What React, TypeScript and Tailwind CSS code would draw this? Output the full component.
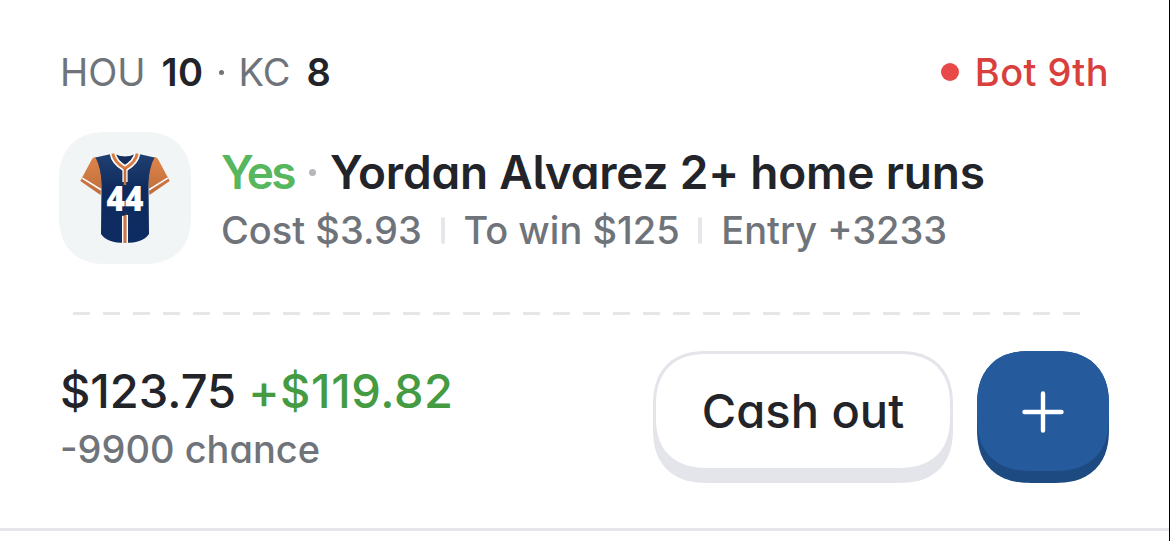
import React from 'react';
import { clsx } from 'clsx';

interface TeamScoreProps {
    team: string;
    score: number;
}

const TeamScore: React.FC<TeamScoreProps> = ({ team, score }) => (
    <span className="flex gap-[16px]">
        <span className="text-[#6f737a]">{team}</span>
        <span className="font-semibold tracking-[0.4px] text-[#222429]">{score}</span>
    </span>
);

const Divider: React.FC = () => <span className="h-[27px] w-[4px] rounded-full bg-[#e6e7ea]" />;

const JerseyIcon: React.FC<{ number: number }> = ({ number }) => (
    <svg viewBox="0 0 150 145" className="-mt-[1px] h-[145px] w-[150px] shrink-0" aria-hidden="true">
        <defs>
            <linearGradient id="body" x1="0" y1="0" x2="0" y2="1">
                <stop offset="0" stopColor="#213f70" />
                <stop offset="0.4" stopColor="#0f2b5d" />
                <stop offset="1" stopColor="#0d2c62" />
            </linearGradient>
            <linearGradient id="sleeve" x1="0" y1="0" x2="0" y2="1">
                <stop offset="0" stopColor="#df8448" />
                <stop offset="1" stopColor="#bd6d3d" />
            </linearGradient>
        </defs>
        {/* sleeves */}
        <path d="M46 32 Q43 32 41.5 35 L30.3 56 L50.5 70 L54 38 Z" fill="url(#sleeve)" />
        <path d="M104 32 Q107 32 108.5 35 L119.7 56 L99.5 70 L96 38 Z" fill="url(#sleeve)" />
        <path d="M32.3 53.2 L51.4 65" stroke="#fff" strokeWidth="1.5" />
        <path d="M117.7 53.2 L98.6 65" stroke="#fff" strokeWidth="1.5" />
        {/* body */}
        <path d="M61 29 Q75 35 89 29 L104.5 32.5 Q99 43 98.5 58 L99 109 Q93 118 75 118 Q57 118 51 109 L51.5 58 Q51 43 45.5 32.5 Z" fill="url(#body)" />
        <path d="M65 29 Q75 34 85 29 L82 36 L75 42 L68 36 Z" fill="#142d5b" />
        {/* collar */}
        <path d="M62.8 28.5 Q64 37 75 43.5 Q86 37 87.2 28.5" fill="none" stroke="#fff" strokeWidth="6.2" />
        <path d="M75 42 V57" stroke="#fff" strokeWidth="5.2" />
        <path d="M62.8 28.5 Q64 37 75 43.5 Q86 37 87.2 28.5" fill="none" stroke="#d77c45" strokeWidth="3" />
        <path d="M75 43 V60" stroke="#c66f3e" strokeWidth="2.6" />
        {/* placket */}
        <path d="M75 90 V118" stroke="#fff" strokeWidth="6" />
        <path d="M75 88 V118" stroke="#c9764a" strokeWidth="3.2" />
        <path d="M71 91 Q77 91 78.5 86 H71 Z" fill="#0f2b5d" />
        <text
            x="75"
            y="85.5"
            textAnchor="middle"
            textLength="37"
            lengthAdjust="spacingAndGlyphs"
            fill="#fff"
            className="font-['Open_Sans',sans-serif] text-[36px] font-extrabold"
        >
            {number}
        </text>
    </svg>
);

interface RaisedButtonProps {
    tone: 'light' | 'blue';
    label?: string;
    children: React.ReactNode;
}

const RaisedButton: React.FC<RaisedButtonProps> = ({ tone, label, children }) => (
    <button
        aria-label={label}
        className={clsx(
            'flex h-[132px] rounded-[54px] [corner-shape:superellipse(1.25)]',
            tone === 'light' ? 'w-[300px] bg-[#e4e5eb] px-[3px] pt-[3px] pb-[15px]' : 'w-[132px] bg-[#1d4a80] pb-[12px]'
        )}
    >
        <span
            className={clsx(
                'flex h-full w-full items-center justify-center [corner-shape:superellipse(1.25)]',
                tone === 'light' ? 'rounded-[51px] bg-white pt-[1px]' : 'rounded-[54px] bg-[#255a9d] pt-[1px]'
            )}
        >
            {children}
        </span>
    </button>
);

export default function App() {
    return (
        <div className="flex h-[541px] w-[1170px] flex-col overflow-hidden border-r border-black bg-white font-['Inter',sans-serif] [font-feature-settings:'cv05','cv11']">
            <div className="flex h-[528px] flex-col pr-[60px] pl-[59px]">
                <header className="mt-[47px] flex h-[50px] items-center justify-between text-[38px]">
                    <div className="flex items-center gap-[15px] pl-[1px]">
                        <TeamScore team="HOU" score={10} />
                        <span className="h-[5px] w-[5px] rounded-full bg-[#6f737a]" />
                        <TeamScore team="KC" score={8} />
                    </div>
                    <div className="flex items-center gap-[16px] text-[#d93f3c]">
                        <span className="h-[18px] w-[18px] rounded-full bg-[#e74a48]" />
                        <span className="font-[450] tracking-[0.4px]">Bot 9th</span>
                    </div>
                </header>

                <section className="mt-[35px] flex h-[132px] gap-[30px]">
                    <div className="flex h-[132px] w-[132px] shrink-0 items-center justify-center overflow-hidden rounded-[48px] bg-[#f2f5f6] [corner-shape:superellipse(1.25)]">
                        <JerseyIcon number={44} />
                    </div>
                    <div className="pt-[11px] whitespace-nowrap">
                        <h1 className="flex h-[58px] items-center text-[46px] font-semibold text-[#222429]">
                            <span className="tracking-[-2.6px] text-[#56b75e]">Yes</span>
                            <span className="mr-[14px] ml-[15px] h-[7px] w-[7px] rounded-full bg-[#b5b7ba]" />
                            <span className="tracking-[-0.2px]">Yordan Alvarez 2+ home runs</span>
                        </h1>
                        <div className="flex h-[58px] items-center gap-[18.8px] text-[38px] font-[450] text-[#6f737a]">
                            <span>Cost $3.93</span>
                            <Divider />
                            <span>To win $125</span>
                            <Divider />
                            <span>Entry +3233</span>
                        </div>
                    </div>
                </section>

                <div className="mt-[48px] ml-[14px] h-[3px] w-[1007px] bg-[repeating-linear-gradient(90deg,#e6e6e9_0_17px,transparent_17px_30px)]" />

                <footer className="mt-[36px] flex h-[132px] justify-between">
                    <div className="pt-[11px] pl-[1px] whitespace-nowrap">
                        <div className="flex h-[58px] items-center gap-[12px] text-[47px] font-medium">
                            <span className="text-[#222429]">$123.75</span>
                            <span className="tracking-[0.6px] text-[#449b41]">+$119.82</span>
                        </div>
                        <div className="flex h-[58px] items-center text-[38px] font-[450] text-[#6f737a]">-9900 chance</div>
                    </div>
                    <div className="flex gap-[24px]">
                        <RaisedButton tone="light">
                            <span className="text-[47px] font-medium text-[#222429]">Cash out</span>
                        </RaisedButton>
                        <RaisedButton tone="blue" label="Add">
                            <svg viewBox="0 0 42 42" className="h-[42px] w-[42px]" stroke="#fff" strokeWidth="4.4" strokeLinecap="round">
                                <path d="M21 2.5 V39.5 M2.5 21 H39.5" />
                            </svg>
                        </RaisedButton>
                    </div>
                </footer>
            </div>
            <div className="h-[3px] shrink-0 bg-[#e5e6e9]" />
        </div>
    );
}
